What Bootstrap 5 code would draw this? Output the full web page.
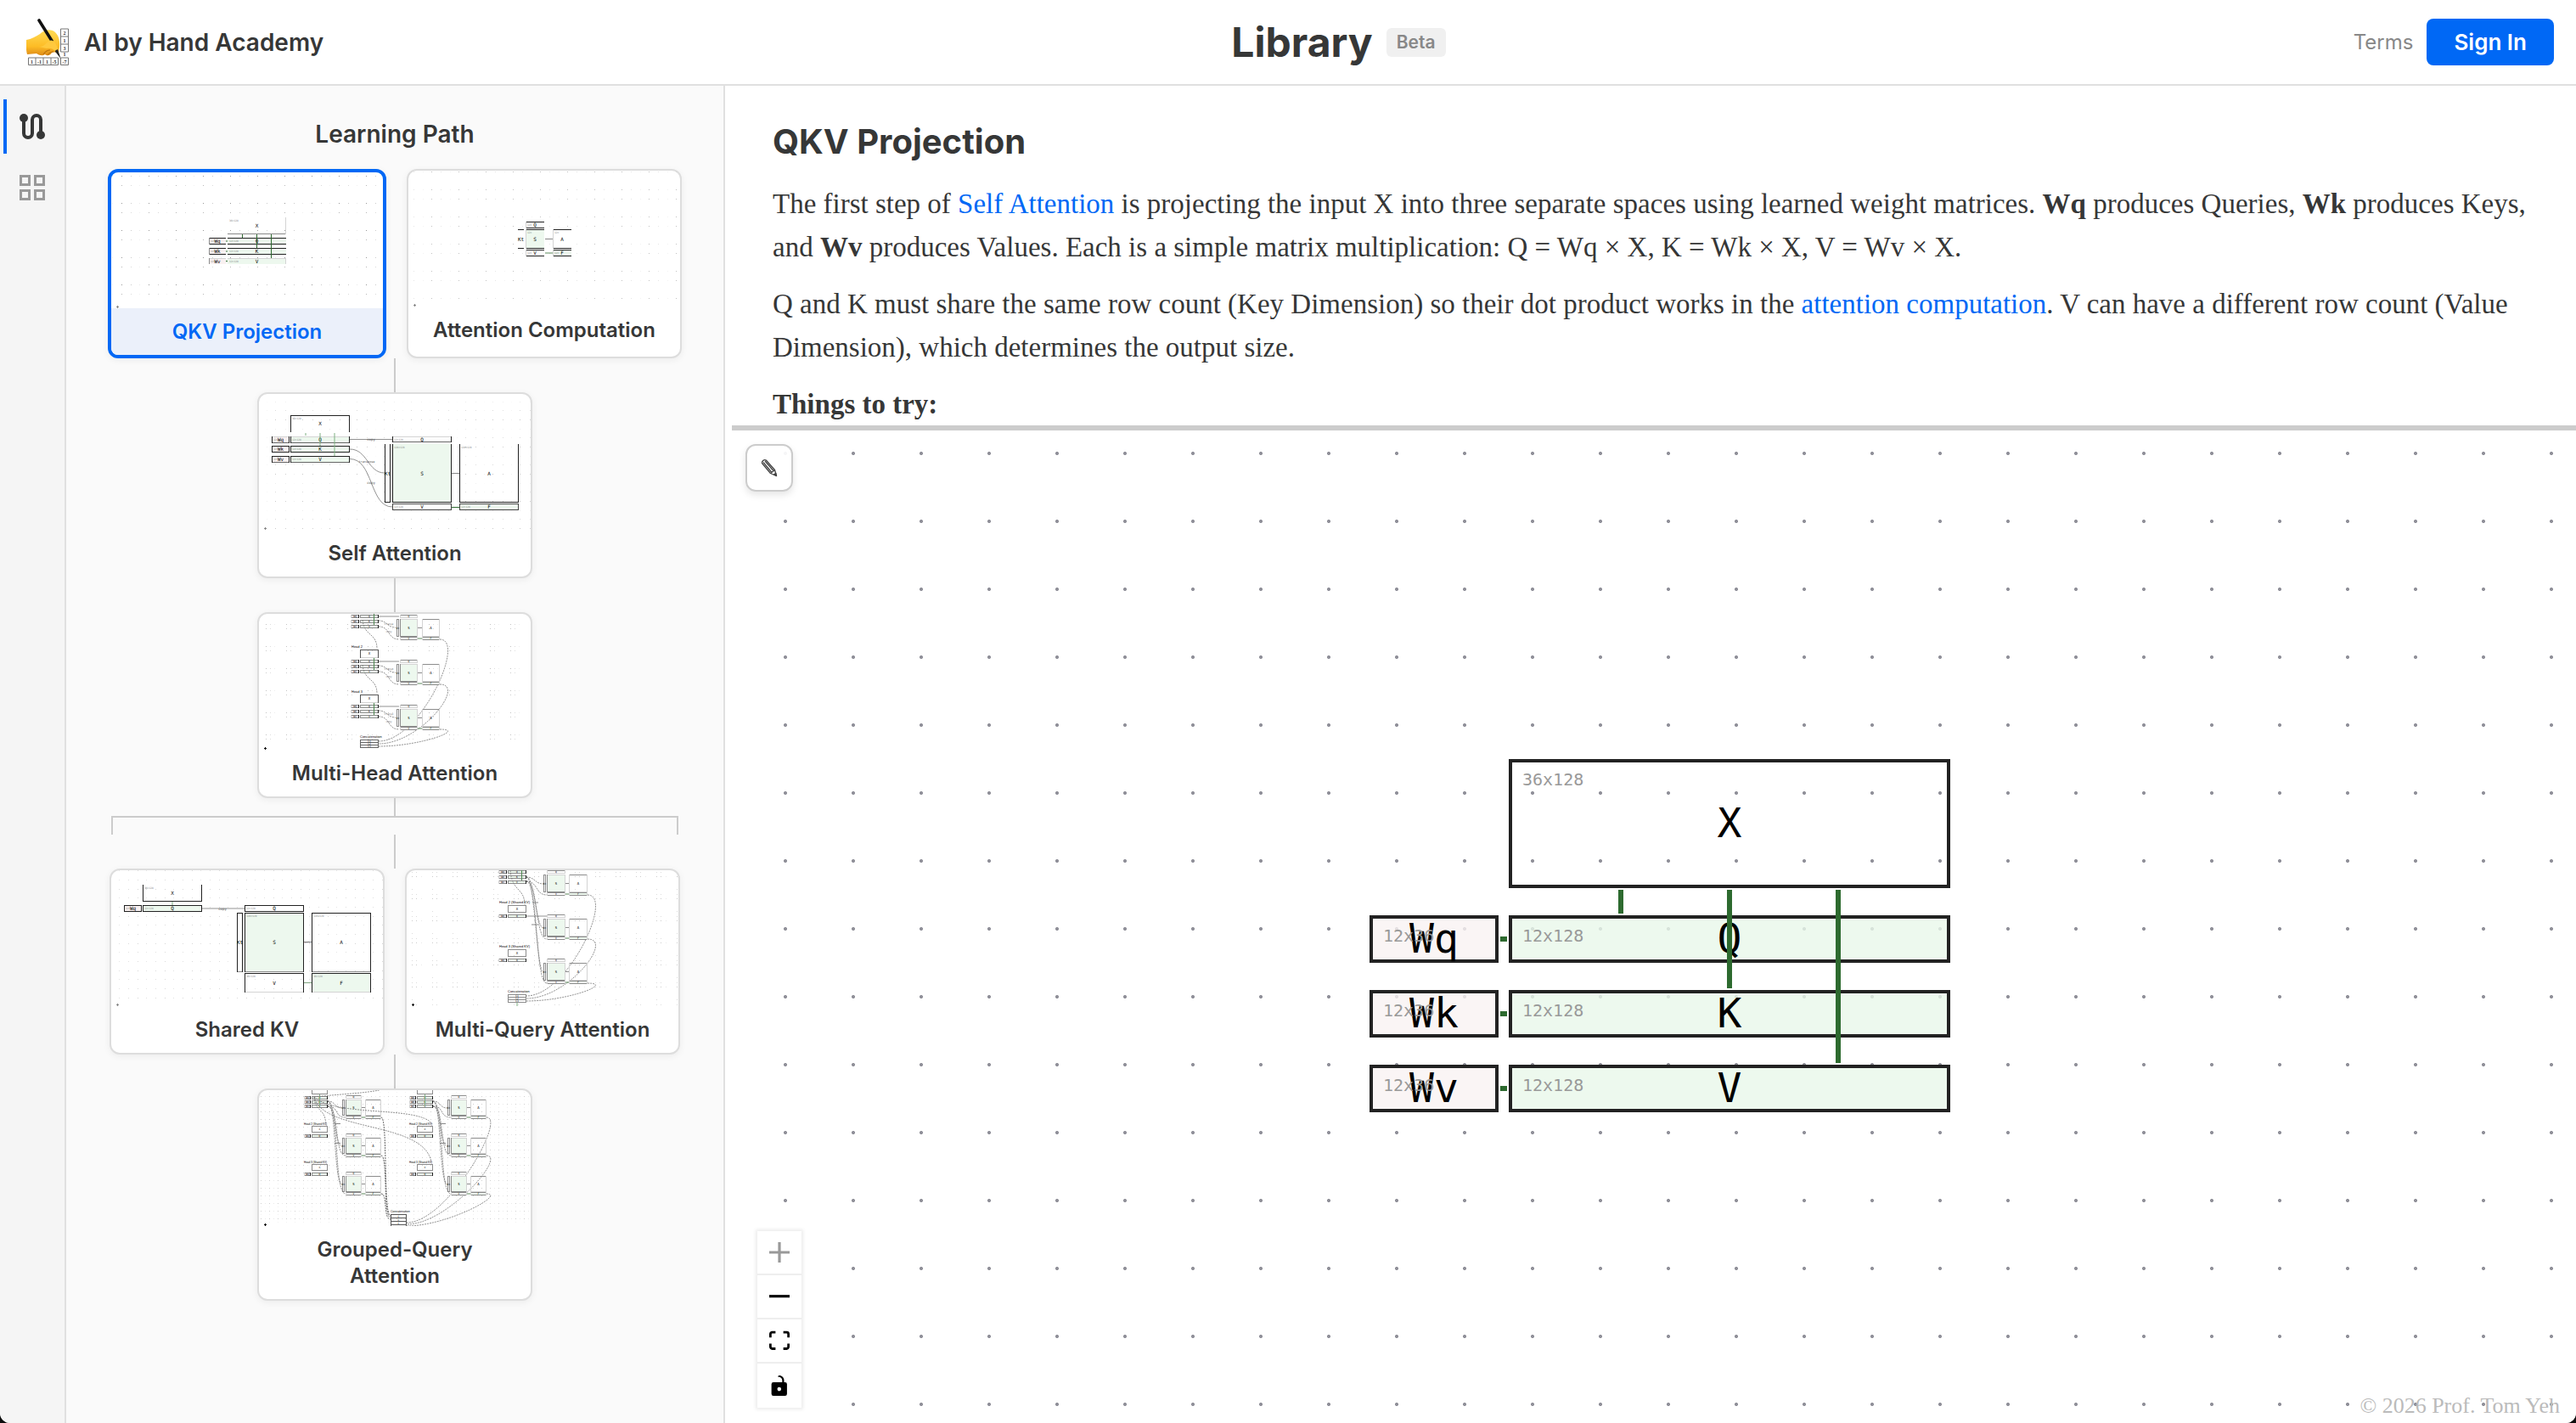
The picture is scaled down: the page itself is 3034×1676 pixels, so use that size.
<!DOCTYPE html>
<html lang="en">
<head>
<meta charset="utf-8">
<meta name="viewport" content="width=device-width, initial-scale=1">
<title>Library - AI by Hand Academy</title>
<link href="https://cdn.jsdelivr.net/npm/bootstrap@5.3.0/dist/css/bootstrap.min.css" rel="stylesheet">
<style>
:root { --brand: #0068f5; --ink: #363737; --line: #e0e0e0; --wire: #ccc; }
html { background: #0d0d0d; }
body { font-family: Inter, "Liberation Sans", sans-serif; color: var(--ink); background: #0d0d0d; }
.shell { background: #fff; border-radius: 0 0 12px 12px; }
.topbar { padding: 22px 26px; border-bottom: 2px solid var(--line); }
.brand-name { font-size: 28px; line-height: 34px; font-weight: 600; color: var(--ink); }
.brand-link { padding-left: 5px; gap: 18px; }
.page-title { font-size: 48px; line-height: 55px; font-weight: 700; }
.beta-tag { font-size: 21px; line-height: 34px; font-weight: 600; color: #888; background: #f0f0f0; border-radius: 6px; padding: 0 12px; }
.terms-link { font-size: 24px; color: #888; }
.btn-signin { height: 55px; padding: 0 32px; font-size: 26px; line-height: 55px; font-weight: 600; color: #fff; background: var(--brand); border: 0; border-radius: 8px; }
.rail { width: 78px; padding-top: 16px; gap: 8px; background: #f5f5f5; border-right: 2px solid var(--line); }
.rail-btn { height: 64px; width: 64px; margin-left: 4px; padding: 0; border: 0; border-left: 4px solid transparent; background: none; color: #999; }
.rail-btn.on { border-left-color: var(--brand); color: var(--ink); }
.path-panel { width: 776px; padding-top: 40px; background: #fafafa; border-right: 2px solid var(--line); }
.path-title { font-size: 28px; line-height: 34px; font-weight: 600; margin-bottom: 24px; }
.lesson { width: 324px; border: 2px solid #ddd; border-radius: 12px; background: #fff; overflow: hidden; color: var(--ink); box-shadow: 0 2px 8px rgba(0,0,0,.06); }
.lesson.on { width: 328px; border: 4px solid var(--brand); color: var(--brand); }
.lesson.on .lesson-name { background: #ebf0fa; }
.lesson-name { padding: 12px 16px; font-size: 24px; line-height: 31px; font-weight: 600; text-align: center; }
.lesson svg { width: 100%; height: 160px; }
.wire { width: 2px; height: 40px; background: var(--wire); }
.wire.short { height: 21px; }
.fork { width: 668px; height: 22px; border: 2px solid var(--wire); border-bottom: 0; }
.splitter { width: 8px; }
.article { height: 400px; padding: 42px 48px 0; }
.article h2 { font-size: 40px; line-height: 48px; font-weight: 700; margin-bottom: 24px; }
.article p { font-family: "Liberation Serif", serif; font-size: 33px; line-height: 51px; margin-bottom: 16px; }
.article a { color: var(--brand); text-decoration: none; }
.grip { height: 6px; background: var(--wire); }
.board { background: #fff radial-gradient(circle, #91919a 0 1.6px, transparent 2.4px) 23px -13px / 80px 80px; }
.edit-btn { left: 16px; top: 16px; width: 56px; height: 56px; padding: 0; border: 2px solid var(--wire); border-radius: 12px; background: rgba(255,255,255,.92); box-shadow: 0 4px 8px rgba(0,0,0,.1); }
.diagram { left: 751px; top: 387px; width: 684px; height: 416px; font-family: "DejaVu Sans Mono", monospace; }
.matrix { border: 4px solid #222; padding-bottom: 3px; color: #000; font-size: 48px; line-height: 48px; }
.matrix small { left: 12px; top: 8px; font-size: 20px; line-height: 24px; color: #999; }
.weight { left: 0; width: 152px; height: 56px; background: rgba(249,243,243,.8); }
.result { left: 164px; width: 520px; height: 56px; background: rgba(233,247,234,.8); }
.source { left: 164px; top: 0; width: 520px; height: 152px; }
.r1 { top: 184px; } .r2 { top: 272px; } .r3 { top: 360px; }
.zoom-box { left: 30px; bottom: 18px; width: 52px; box-shadow: 0 0 4px 2px rgba(0,0,0,.08); }
.zoom-box button { height: 52px; padding: 0; border: 0; border-bottom: 2px solid #eee; background: #fff; color: #000; }
.zoom-box button:last-child { border-bottom: 0; }
.zoom-box svg { max-width: 24px; max-height: 24px; fill: currentColor; }
.zoom-box button:disabled svg { fill-opacity: .4; }
.credit { right: 19px; bottom: 4px; font-family: "Liberation Serif", serif; font-size: 26px; line-height: 32px; color: #bbb; }
</style>
<script src="https://cdn.jsdelivr.net/npm/bootstrap@5.3.0/dist/js/bootstrap.bundle.min.js"></script>
</head>
<body>
<div class="shell vh-100 d-flex flex-column overflow-hidden">
  <header class="topbar d-flex align-items-center justify-content-between">
    <a href="#" class="brand-link d-flex align-items-center text-decoration-none">
      <svg width="50" height="55" viewBox="0 0 50 55" aria-hidden="true">
        <defs>
          <linearGradient id="skin" x1="0" y1="0" x2="0" y2="1"><stop offset="0" stop-color="#ffdb55"/><stop offset=".65" stop-color="#fdbc25"/><stop offset="1" stop-color="#dd8a18"/></linearGradient>
        </defs>
        <g fill="#fff" stroke="#777" stroke-width="1">
          <path d="M40.500 12H49.500V39H40.500ZM40.500 21H49.500M40.500 30H49.500"/>
          <path d="M2.500 46H37.500V54.500H2.500ZM11 46V54.500M20 46V54.500M29 46V54.500M40.500 46H49.500V54.500H40.500Z"/>
        </g>
        <g font-family="Liberation Serif" font-size="6" font-weight="700" fill="#333" text-anchor="middle">
          <text x="45" y="18.500">2</text><text x="45" y="27.500">1</text><text x="45" y="36.500">3</text><text x="45" y="44">1</text>
          <text x="6.500" y="52.500">1</text><text x="15.500" y="52.500">-1</text><text x="24.500" y="52.500">1</text><text x="33" y="52.500">-5</text><text x="45" y="52.500">-7</text>
        </g>
        <path d="M0 25C6 24 11 21 16 18C20 14 26 12 31 14C37 17 40 24 39 33L38 40C34 40 32 39 30 40C28 44 24 44 22 42C18 45 14 42 12 41L1 42C-.500 37-.500 30 0 25Z" fill="url(#skin)"/>
        <path d="M20 42C22 39 25 37 28 37M25 43C27 40 29 39 32 39" fill="none" stroke="#b9700c" stroke-width="1.200"/>
        <path d="M15 2L30 26" stroke="#111" stroke-width="3.600" stroke-linecap="round"/>
        <path d="M15 33C22 33 23 28 27 26C31 24 35 27 38 38L34 39C32 35 28 34 24 35Z" fill="#ffc93e"/>
        <path d="M33.500 38L37 36L40.500 47Z" fill="#222"/>
      </svg>
      <span class="brand-name">AI by Hand Academy</span>
    </a>
    <div class="d-flex align-items-center gap-3">
      <h1 class="page-title mb-0">Library</h1>
      <span class="beta-tag">Beta</span>
    </div>
    <div class="d-flex align-items-center gap-3">
      <a href="#" class="terms-link text-decoration-none">Terms</a>
      <button type="button" class="btn btn-signin">Sign In</button>
    </div>
  </header>

  <div class="d-flex flex-grow-1 overflow-hidden">
    <nav class="rail d-flex flex-column flex-shrink-0" aria-label="Views">
      <button type="button" class="rail-btn on" aria-label="Learning path">
        <svg width="30" height="30" viewBox="0 0 30 30" fill="none" stroke="currentColor" stroke-width="4"><path d="M5 5V23a5 5 0 0 0 10 0V7a5 5 0 0 1 10 0V25"/><g fill="currentColor" stroke="none"><circle cx="5" cy="5" r="5"/><circle cx="25" cy="25" r="5"/></g></svg>
      </button>
      <button type="button" class="rail-btn" aria-label="All lessons">
        <svg width="30" height="30" viewBox="0 0 30 30" fill="none" stroke="currentColor" stroke-width="3"><path d="M1.500 1.500h10v10h-10zM18.500 1.500h10v10h-10zM1.500 18.500h10v10h-10zM18.500 18.500h10v10h-10z"/></svg>
      </button>
    </nav>

    <aside class="path-panel d-flex flex-column align-items-center flex-shrink-0">
      <h2 class="path-title">Learning Path</h2>
      <div class="d-flex gap-4">
        <a href="#" class="lesson on text-decoration-none"><svg class="d-block" data-thumb="qkv" viewBox="0 0 320 160"></svg><div class="lesson-name">QKV Projection</div></a>
        <a href="#" class="lesson text-decoration-none"><svg class="d-block" data-thumb="attention" viewBox="0 0 320 160"></svg><div class="lesson-name px-0">Attention Computation</div></a>
      </div>
      <div class="wire"></div>
      <a href="#" class="lesson text-decoration-none"><svg class="d-block" data-thumb="self" viewBox="0 0 320 160"></svg><div class="lesson-name">Self Attention</div></a>
      <div class="wire"></div>
      <a href="#" class="lesson text-decoration-none"><svg class="d-block" data-thumb="multihead" viewBox="0 0 320 160"></svg><div class="lesson-name">Multi-Head Attention</div></a>
      <div class="wire short"></div>
      <div class="fork"></div>
      <div class="wire"></div>
      <div class="d-flex gap-4">
        <a href="#" class="lesson text-decoration-none"><svg class="d-block" data-thumb="shared" viewBox="0 0 320 160"></svg><div class="lesson-name">Shared KV</div></a>
        <a href="#" class="lesson text-decoration-none"><svg class="d-block" data-thumb="mqa" viewBox="0 0 320 160"></svg><div class="lesson-name">Multi-Query Attention</div></a>
      </div>
      <div class="wire"></div>
      <a href="#" class="lesson text-decoration-none"><svg class="d-block" data-thumb="gqa" viewBox="0 0 320 160"></svg><div class="lesson-name">Grouped-Query<br>Attention</div></a>
    </aside>
    <div class="splitter flex-shrink-0"></div>

    <main class="flex-grow-1 d-flex flex-column overflow-hidden">
      <article class="article flex-shrink-0 overflow-hidden">
        <h2>QKV Projection</h2>
        <p>The first step of <a href="#">Self Attention</a> is projecting the input X into three separate spaces using learned weight matrices. <b>Wq</b> produces Queries, <b>Wk</b> produces Keys, and <b>Wv</b> produces Values. Each is a simple matrix multiplication: Q = Wq × X, K = Wk × X, V = Wv × X.</p>
        <p>Q and K must share the same row count (Key Dimension) so their dot product works in the <a href="#">attention computation</a>. V can have a different row count (Value Dimension), which determines the output size.</p>
        <p class="mb-0"><b>Things to try:</b></p>
      </article>
      <div class="grip flex-shrink-0" role="separator"></div>
      <section class="board flex-grow-1 position-relative overflow-hidden">
        <button type="button" class="edit-btn position-absolute d-flex align-items-center justify-content-center" aria-label="Edit">
          <svg width="20" height="22" viewBox="0 0 20 22" fill="none" stroke="#444" stroke-width="1.300" stroke-linejoin="round"><path d="M1.500 5.500C1 3 4 .800 6.300 2L16.500 13.500L18.500 20.500L11.500 17.500ZM3 4.500L13 16.500M5 3L15 14.500M11.500 17.500L16.500 13.500"/><path d="M15.500 19L18.500 20.500L17.700 17.200Z" fill="#222"/></svg>
        </button>

        <div class="diagram position-absolute">
          <div class="matrix source position-absolute d-flex align-items-center justify-content-center"><small class="position-absolute">36x128</small>X</div>
          <div class="matrix weight r1 position-absolute d-flex align-items-center justify-content-center">Wq<small class="position-absolute">12x36</small></div>
          <div class="matrix weight r2 position-absolute d-flex align-items-center justify-content-center">Wk<small class="position-absolute">12x36</small></div>
          <div class="matrix weight r3 position-absolute d-flex align-items-center justify-content-center">Wv<small class="position-absolute">12x36</small></div>
          <div class="matrix result r1 position-absolute d-flex align-items-center justify-content-center"><small class="position-absolute">12x128</small>Q</div>
          <div class="matrix result r2 position-absolute d-flex align-items-center justify-content-center"><small class="position-absolute">12x128</small>K</div>
          <div class="matrix result r3 position-absolute d-flex align-items-center justify-content-center"><small class="position-absolute">12x128</small>V</div>
          <svg class="position-absolute top-0 start-0" width="684" height="416" viewBox="0 0 684 416" stroke="#2d6a2f" stroke-width="6" fill="none"><path d="M296 154V182M424 154V270M552 154V358M154 212h8M154 300h8M154 388h8"/></svg>
        </div>

        <div class="zoom-box position-absolute d-flex flex-column">
          <button type="button" class="d-flex align-items-center justify-content-center" disabled aria-label="Zoom in"><svg width="24" height="24" viewBox="0 0 32 32"><path d="M32 18.133H18.133V32h-4.266V18.133H0v-4.266h13.867V0h4.266v13.867H32z"/></svg></button>
          <button type="button" class="d-flex align-items-center justify-content-center" aria-label="Zoom out"><svg width="24" height="4" viewBox="0 0 32 5"><path d="M0 0h32v4.200H0z"/></svg></button>
          <button type="button" class="d-flex align-items-center justify-content-center" aria-label="Fit view"><svg width="24" height="24" viewBox="0 0 32 30"><path d="M3.692 4.630c0-.530.400-.938.939-.938h5.215V0H4.708C2.130 0 0 2.054 0 4.630v5.216h3.692V4.631zM27.354 0h-5.200v3.692h5.170c.530 0 .984.400.984.939v5.215H32V4.631A4.624 4.624 0 0027.354 0zm.954 24.830c0 .532-.400.940-.939.940h-5.215v3.768h5.215c2.577 0 4.631-2.130 4.631-4.707v-5.139h-3.692v5.139zm-23.677.940c-.531 0-.939-.400-.939-.940v-5.138H0v5.139c0 2.577 2.130 4.707 4.708 4.707h5.138V25.770H4.631z"/></svg></button>
          <button type="button" class="d-flex align-items-center justify-content-center" aria-label="Toggle lock"><svg width="24" height="24" viewBox="0 0 25 32"><path d="M21.333 10.667H19.810V7.619C19.810 3.429 16.380 0 12.190 0c-4.114 1.828-1.370 2.133.305 2.438 1.676.305 4.420 2.590 4.420 5.181v3.048H3.047A3.056 3.056 0 000 13.714v15.238A3.056 3.056 0 003.048 32h18.285a3.056 3.056 0 003.048-3.048V13.714a3.056 3.056 0 00-3.048-3.047zM12.190 24.533a3.056 3.056 0 01-3.047-3.047 3.056 3.056 0 013.047-3.048 3.056 3.056 0 013.048 3.048 3.056 3.056 0 01-3.048 3.047z"/></svg></button>
        </div>
        <div class="credit position-absolute">© 2026 Prof. Tom Yeh</div>
      </section>
    </main>
  </div>
</div>

<script>
// Small helpers that draw the lesson thumbnails (320 x 160 units each).
const GREEN = '#edf8ee', PINK = '#f9f1f1', DARK = '#222', MID = '#8c8c8c', PALE = '#d4d4d4';
const line = (x1, y1, x2, y2, c, w = 1) => `<path d="M${x1} ${y1}L${x2} ${y2}" stroke="${c}" stroke-width="${w}" fill="none"/>`;
const dash = (d, c = '#777', w = .8) => `<path d="${d}" stroke="${c}" stroke-width="${w}" stroke-dasharray="2 1" fill="none"/>`;
const curve = (d) => `<path d="${d}" stroke="#777" stroke-width=".8" fill="none"/>`;
const text = (x, y, s, size = 6, c = '#000', anchor = 'middle', font = 'DejaVu Sans Mono') =>
  `<text x="${x}" y="${y}" font-family="${font}" font-size="${size}" fill="${c}" text-anchor="${anchor}">${s}</text>`;
// e: edge colours in the order top, right, bottom, left
function box(x, y, x2, y2, fill, e, label, dims, size = 6) {
  const [t, r, b, l] = Array.isArray(e) ? e : [e, e, e, e];
  let s = `<rect x="${x}" y="${y}" width="${x2 - x}" height="${y2 - y}" fill="${fill}"/>`;
  if (t) s += line(x, y + .5, x2, y + .5, t);
  if (b) s += line(x, y2 - .5, x2, y2 - .5, b);
  if (l) s += line(x + .5, y, x + .5, y2, l);
  if (r) s += line(x2 - .5, y, x2 - .5, y2, r);
  if (dims) s += text(x + 2, y + 4.5, dims, 3, '#888', 'start');
  if (label) s += text((x + x2) / 2, (y + y2) / 2 + size * .36, label, size);
  return s;
}
function dots(id, w, h, pts) {
  return `<pattern id="${id}" width="${w}" height="${h}" patternUnits="userSpaceOnUse">` +
    pts.map(([x, y, o]) => `<rect x="${x}" y="${y}" width="1" height="1" fill="#555" fill-opacity="${o}"/>`).join('') +
    `</pattern><rect width="320" height="160" fill="url(#${id})"/>`;
}
const grid3 = (id, xs, ys) => dots(id, 32, 32, xs.flatMap(([x, a]) => ys.map(([y, b]) => [x, y, a * b])));
const mark = (c = '#888') => line(6, 158.5, 9, 158.5, c) + line(7.5, 157, 7.5, 160, c);

// The S / A / V / F block on the right of each head
function scores(x, y, w, h, gap) {
  const kx = x - 4, ax = x + w + gap;
  return box(x, y - 5, x + w, y - 1, '#fff', [MID, PALE, PALE, PALE], 'Q', '', 3) +
    box(kx, y, x - 1, y + h, '#fff', MID, 'Kt', '', 3) +
    box(x, y, x + w, y + h, GREEN, [PALE, PALE, MID, MID], 'S', '', 4) +
    box(x, y + h, x + w, y + h + 4, '#fff', [MID, PALE, MID, PALE], 'V', '', 3) +
    box(ax, y, ax + w, y + h, 'none', [MID, PALE, PALE, PALE], 'A', '', 4) +
    box(ax, y + h, ax + w, y + h + 4, GREEN, [MID, PALE, MID, PALE], 'F', '', 3) +
    line(x + w, y + h / 2, ax, y + h / 2, MID) + line(x + w, y + h + 2, ax, y + h + 2, '#5c8a5d');
}
function row(x, y, ww, w, label) {
  return box(x, y, x + ww, y + 4, PINK, [MID, DARK, MID, PALE], 'W' + label.toLowerCase(), '', 3) +
    box(x + ww + 1, y, x + ww + 1 + w, y + 4, GREEN, [MID, DARK, MID, MID], label, '', 3);
}

const thumbs = {
  qkv: () => {
    let s = grid3('d1', [[12, .6], [23, .3], [1, .12]], [[4, 1], [15, .7]]);
    s += box(137, 53, 206, 73, 'none', [null, PALE, '#888', null], 'X', '36x128');
    s += box(115, 77, 135, 85, PINK, [DARK, null, DARK, MID], 'Wq', '12x') + box(137, 77, 206, 85, GREEN, [DARK, null, DARK, null], 'Q', '12x128');
    s += box(115, 89, 135, 97, PINK, [DARK, null, DARK, MID], 'Wk', '12x') + box(137, 89, 206, 97, GREEN, [DARK, null, DARK, null], 'K', '12x128');
    s += box(115, 101, 135, 108, PINK, [PALE, null, null, MID], 'Wv', '12x') + box(137, 101, 206, 108, GREEN, [PALE, PALE, null, null], 'V', '12x128');
    const g = '#2d6a2f';
    s += line(154.5, 73, 154.5, 77, g) + line(171.5, 73, 171.5, 89, g) + line(188.5, 73, 188.5, 101, g);
    return s + line(135, 81, 137, 81, g) + line(135, 93, 137, 93, g) + line(135, 104.5, 137, 104.5, g) + mark();
  },
  attention: () => {
    let s = grid3('d2', [[27, .6], [6, .25], [17, .12]], [[1, .6], [22, .6]]);
    s += box(138, 60, 160, 68, '#fff', [DARK, null, DARK, PALE], 'Q', '12x') + box(129, 69, 136, 92, '#fff', [DARK, null, DARK, null], 'Kt', '');
    s += box(138, 69, 160, 92, GREEN, [DARK, null, DARK, PALE], 'S', '12x') + box(170, 69, 192, 92, '#fff', [DARK, null, DARK, PALE], 'A', '12x');
    s += box(138, 93, 160, 101, '#fff', [DARK, null, DARK, PALE], 'V', '12x') + box(170, 93, 192, 101, GREEN, [DARK, null, DARK, PALE], 'F', '12x');
    return s + line(161, 80.5, 170, 80.5, '#888') + line(161, 97, 170, 97, '#5c8a5d') + mark();
  },
  self: () => {
    let s = grid3('d3', [[19, .35], [31, .3], [9, .1]], [[30, .9], [19, .6], [9, .3]]);
    s += box(37, 25, 107, 45, 'none', [DARK, DARK, null, DARK], 'X', '36x128');
    [[50, 'Q'], [61, 'K'], [73, 'V']].forEach(([y, n], i) => {
      const t = i ? DARK : PALE, b = i === 1 ? DARK : '#666';
      s += box(15, y, 36, y + 8, PINK, [t, DARK, b, DARK], 'W' + n.toLowerCase(), '12x');
      s += box(37, y, 107, y + 8, GREEN, [t, DARK, b, DARK], n, '12x128');
    });
    const g = '#7fb082';
    s += line(55, 46, 55, 49, g) + line(72, 46, 72, 61, g) + line(89, 46, 89, 73, g);
    s += curve('M107 53.500H157') + curve('M107 65C128 65 128 93 148 93') + curve('M107 76.500C135 76.500 130 133 157 133');
    s += text(132, 55, 'copy', 4, '#555') + text(127, 80.5, 'transpose', 3.5, '#555') + text(132, 106, 'copy', 4, '#555');
    s += box(157, 50, 227, 57, '#fff', [PALE, DARK, '#666', DARK], 'Q', '12x128') + box(148, 59, 155, 128, '#fff', [null, DARK, DARK, DARK], 'Kt', '');
    s += box(157, 59, 227, 128, GREEN, [null, DARK, DARK, DARK], 'S', '128x128') + box(236, 59, 306, 128, 'none', [null, DARK, DARK, DARK], 'A', '128x128');
    s += box(157, 129, 227, 137, '#fff', '#444', 'V', '12x128') + box(236, 129, 306, 137, GREEN, '#444', 'F', '12x128');
    return s + line(227, 93.5, 236, 93.5, '#888') + line(227, 133.5, 236, 133.5, '#2d6a2f') + mark();
  },
  multihead: () => {
    let s = dots('d4', 24, 26, [[8, 12, .35], [13, 12, .2], [8, 17, .3], [13, 17, .2], [18, 12, .1]]);
    for (let h = 0; h < 3; h++) {
      const o = (h - 1) * 53;
      if (h) {
        s += text(109, 40 + o, 'Head ' + (h + 1), 4, '#000', 'start', 'Liberation Sans');
        s += box(119, 42 + o, 141, 52 + o, 'none', ['#555', '#555', PALE, '#555'], 'X', '', 4);
      }
      s += row(108, 54 + o, 10, 22, 'Q') + row(108, 60 + o, 10, 22, 'K') + row(108, 66 + o, 10, 22, 'V');
      s += line(135.5, Math.max(0, 52 + o), 135.5, 66 + o, '#4f8a52');
      s += curve(`M141 ${56 + o}H165`) + dash(`M141 ${61 + o}C151 ${61 + o} 151 ${69 + o} 161 ${69 + o}`) + dash(`M141 ${68 + o}C155 ${68 + o} 151 ${83 + o} 165 ${83 + o}`);
      s += text(153, 66 + o, 'transp', 3, '#777') + text(153, 75 + o, 'copy', 3, '#777');
      s += scores(166, 59 + o, 21, 21, 5);
      s += dash(`M213 ${83 + o}C245 ${83 + o} 190 ${150 + 3 * h} 141 ${150 + 3 * h}`);
      if (h < 2) s += dash(`M122 ${60 + o}C124 ${80 + o} 139 ${75 + o} 139 ${94 + o}`);
    }
    s += text(119, 146, 'Concatenation', 4, '#000', 'start', 'Liberation Sans');
    for (let i = 0; i < 3; i++) s += box(119, 148 + i * 3, 141, 152 + i * 3, 'none', '#666', 'C' + (i + 1), '', 3);
    return s + mark('#000');
  },
  shared: () => {
    let s = grid3('d5', [[9, .25], [20, .3], [31, .35]], [[0, .6], [11, .6], [22, .7]]);
    s += box(37, 17, 107, 37, 'none', [null, DARK, DARK, DARK], 'X', '36x128');
    s += box(15, 41, 36, 49, PINK, DARK, 'Wq', '12x') + box(37, 41, 107, 49, GREEN, DARK, 'Q', '12x128');
    s += line(72, 37, 72, 41, '#7fb082') + curve('M107 45H157') + text(131, 46.5, 'copy', 4, '#555');
    s += box(157, 41, 227, 49, '#fff', DARK, 'Q', '12x128') + box(148, 50, 155, 120, '#fff', [DARK, DARK, MID, DARK], 'Kt', '');
    s += box(157, 50, 227, 120, GREEN, [DARK, DARK, MID, DARK], 'S', '128x128') + box(236, 50, 306, 120, 'none', [DARK, DARK, MID, DARK], 'A', '128x128');
    s += box(157, 121, 227, 144, 'none', [DARK, DARK, PALE, DARK], 'V', '36x128') + box(236, 121, 306, 144, GREEN, [DARK, DARK, PALE, DARK], 'F', '36x128');
    return s + line(227, 84.5, 236, 84.5, '#888') + line(227, 132.5, 236, 132.5, '#7fa581') + text(231, 86, 'soft', 3, '#777') + mark();
  },
  mqa: () => {
    let s = dots('d6', 24, 26, [[6, 2, .2], [11, 2, .2], [6, 7, .3], [11, 7, .3], [17, 7, .12], [6, 22, .2]]);
    for (let h = 0; h < 3; h++) {
      const o = (h - 1) * 52;
      if (h) {
        s += text(109, 39 + o, `Head ${h + 1} (Shared KV)`, 4, '#000', 'start', 'Liberation Sans');
        s += box(119, 41 + o, 141, 50 + o, 'none', MID, 'X', '', 4) + row(108, 52 + o, 10, 22, 'Q');
      }
      if (h === 1) s += curve('M141 54H165');
      s += scores(165, 57 + o, 22, 21, 4);
      s += dash(`M213 ${81 + o}C245 ${81 + o} 190 ${148 + 3 * h} 141 ${148 + 3 * h}`);
      s += dash(`M141 8C151 8 ${151 + h} ${68 + o} 161 ${68 + o}`) + dash(`M141 13C155 13 151 ${81 + o} 165 ${81 + o}`);
    }
    s += row(108, 0, 10, 22, 'Q') + row(108, 6, 10, 22, 'K') + row(108, 12, 10, 22, 'V') + line(135.5, 0, 135.5, 12, '#4f8a52');
    s += dash('M122 0C124 26 139 20 139 41') + line(147, 64, 155, 64, '#888') + line(148, 38, 155, 38, '#888');
    s += text(119, 144, 'Concatenation', 4, '#000', 'start', 'Liberation Sans');
    for (let i = 0; i < 3; i++) s += box(119, 146 + i * 3, 141, 150 + i * 3, 'none', MID, 'C' + (i + 1), '', 3);
    return s + line(130, 156, 130, 160, '#7fb082') + mark('#000');
  },
  gqa: () => {
    let s = dots('d7', 10, 9, [[2, 7, .28], [7, 7, .12], [2, 2, .08]]);
    for (let c = 0; c < 2; c++) {
      const x = c * 124;
      for (let h = 0; h < 3; h++) {
        const o = (h - 1) * 45;
        s += box(62 + x, 42 + o, 81 + x, 50 + o, 'none', MID, h ? 'X' : '', '', 3);
        if (h) s += text(53 + x, 41 + o, `Head ${h + 1} (Shared KV)`, 3, '#000', 'start', 'Liberation Sans') + row(53 + x, 52 + o, 8, 19, 'Q');
        s += scores(102 + x, 56 + o, 19, 19, 4);
        s += dash(`M${81 + x} 13C${91 + x} 13 ${88 + x} ${66 + o} ${98 + x} ${66 + o}`);
        s += dash(`M${81 + x} 19C${95 + x} 19 ${88 + x} ${77 + o} ${102 + x} ${77 + o}`);
        s += c ? dash(`M268 ${77 + o}C292 ${77 + o} 222 ${156 + h * 2} 174 ${156 + h * 2}`)
               : dash(`M144 ${77 + o}C152 ${77 + o} 146 ${148 + h * 2} 155 ${148 + h * 2}`, '#666', 1);
      }
      s += row(53 + x, 7, 8, 19, 'Q') + row(53 + x, 12, 8, 19, 'K') + row(53 + x, 17, 8, 19, 'V');
      s += line(89 + x, 39.5, 96 + x, 39.5, '#888') + line(89 + x, 62.5, 96 + x, 62.5, '#888') + line(71.5 + x, 5, 71.5 + x, 18, '#7fb082');
    }
    s += dash('M65 8C66 26 78 20 79 41') + dash('M65 8C90 32 190 18 204 40') + dash('M65 8C75 50 195 36 203 85') + dash('M65 8C90 5 120 4 142 0');
    s += text(155, 144, 'Concatenation', 3.5, '#000', 'start', 'Liberation Sans');
    for (let i = 0; i < 4; i++) s += box(155, 146 + i * 4, 174, 151 + i * 4, 'none', '#555', i < 3 ? 'C' : '', '', 3);
    return s + mark('#000');
  }
};
document.querySelectorAll('svg[data-thumb]').forEach(el => { el.innerHTML = thumbs[el.dataset.thumb](); });
</script>
</body>
</html>
